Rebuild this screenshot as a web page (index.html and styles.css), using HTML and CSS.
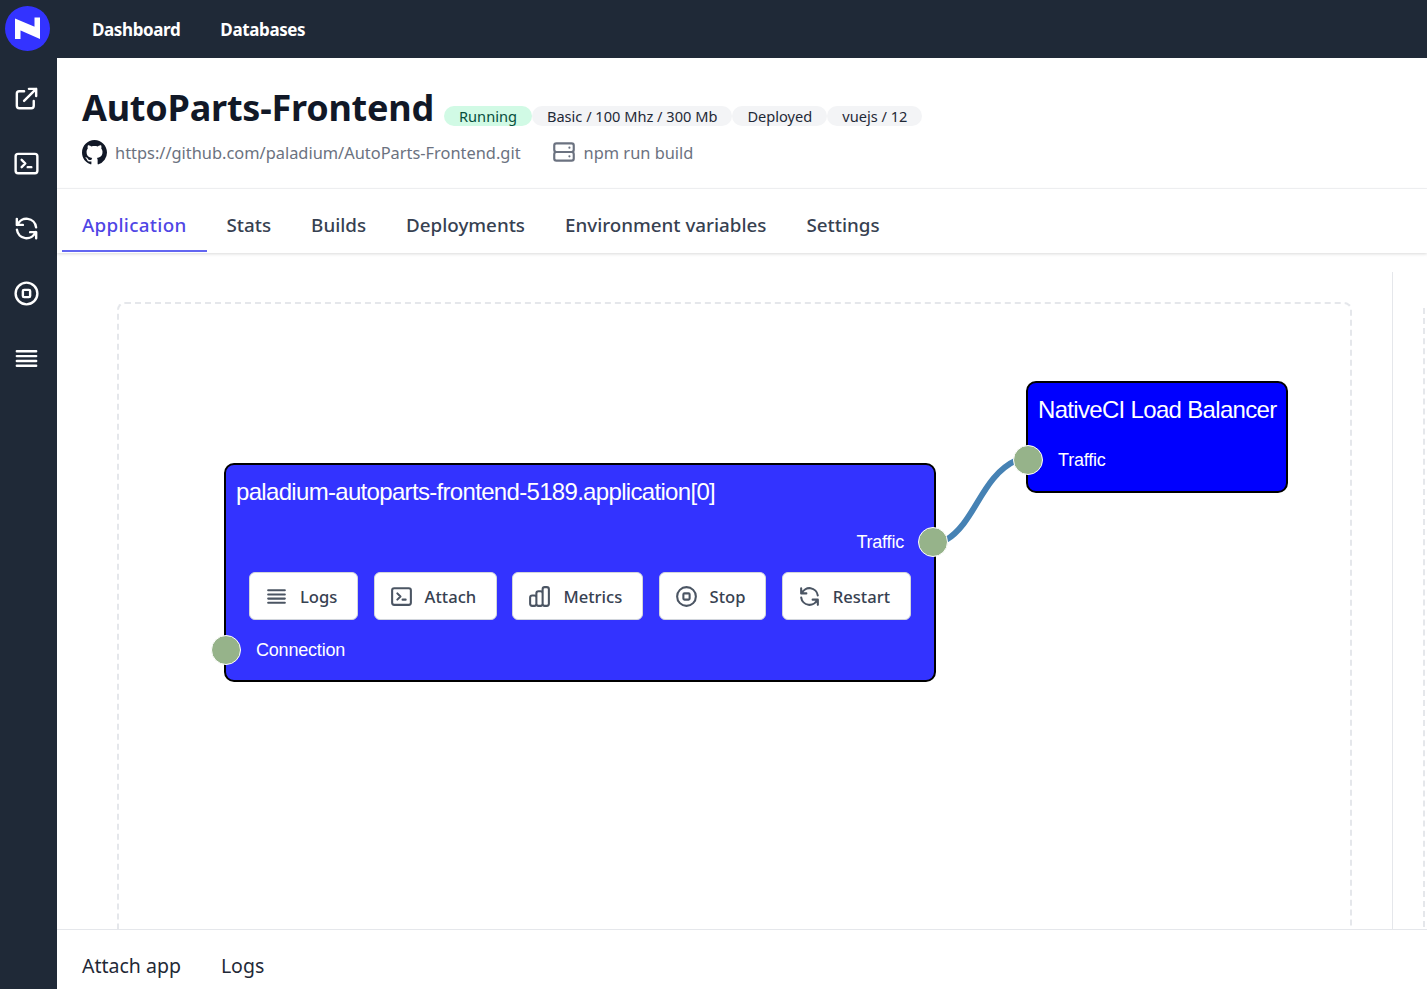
FILE: index.html

```html
<!DOCTYPE html>
<html lang="en">
<head>
  <meta charset="UTF-8">
  <title>AutoParts-Frontend</title>
  <link rel="stylesheet" href="styles.css">
</head>
<body>

<div class="app">
  <aside class="side">
    <svg class="logo" viewBox="0 0 45 45">
      <circle cx="22.5" cy="22.5" r="22.5" fill="#3333ff"/>
      <path d="M10 12.500L35 23v10L10 22zM10 22l5.500 2.300V33H10zM29.500 11.500H35V23l-5.500-2.300z" fill="#fff"/>
    </svg>
    <svg class="side-icon" viewBox="0 0 24 24"><path d="M10 6H6a2 2 0 00-2 2v10a2 2 0 002 2h10a2 2 0 002-2v-4M14 4h6m0 0v6m0-6L10 14"/></svg>
    <svg class="side-icon" viewBox="0 0 24 24"><path d="M8 9l3 3-3 3m5 0h3M5 20h14a2 2 0 002-2V6a2 2 0 00-2-2H5a2 2 0 00-2 2v12a2 2 0 002 2z"/></svg>
    <svg class="side-icon" viewBox="0 0 24 24"><path d="M4 4v5h.582m15.356 2A8.001 8.001 0 004.582 9m0 0H9m11 11v-5h-.581m0 0a8.003 8.003 0 01-15.357-2m15.357 2H15"/></svg>
    <svg class="side-icon" viewBox="0 0 24 24"><path d="M21 12a9 9 0 11-18 0 9 9 0 0118 0zM9 10a1 1 0 011-1h4a1 1 0 011 1v4a1 1 0 01-1 1h-4a1 1 0 01-1-1v-4z"/></svg>
    <svg class="side-icon" viewBox="0 0 24 24"><path d="M4 6h16M4 10h16M4 14h16M4 18h16"/></svg>
  </aside>

  <div class="content">
    <nav class="topnav">
      <a href="#">Dashboard</a>
      <a href="#">Databases</a>
    </nav>

    <header class="head">
      <div class="title-row">
        <h1>AutoParts-Frontend</h1>
        <div class="badges">
          <span class="badge badge-green">Running</span>
          <span class="badge">Basic / 100 Mhz / 300 Mb</span>
          <span class="badge">Deployed</span>
          <span class="badge">vuejs / 12</span>
        </div>
      </div>
      <div class="meta-row">
        <svg class="github" viewBox="0 0 16 16"><path d="M8 0C3.58 0 0 3.58 0 8c0 3.54 2.29 6.53 5.47 7.59.4.07.55-.17.55-.38 0-.19-.01-.82-.01-1.49-2.01.37-2.530-.49-2.69-.94-.09-.23-.48-.94-.82-1.13-.28-.15-.68-.52-.01-.53.63-.01 1.08.58 1.23.82.72 1.21 1.87.87 2.33.66.07-.52.28-.87.51-1.07-1.78-.2-3.64-.89-3.64-3.95 0-.87.31-1.59.82-2.15-.08-.2-.36-1.02.08-2.12 0 0 .67-.21 2.2.82.64-.18 1.32-.27 2-.27.68 0 1.36.09 2 .27 1.53-1.04 2.2-.82 2.2-.82.44 1.1.16 1.92.08 2.12.51.56.82 1.27.82 2.15 0 3.07-1.87 3.75-3.65 3.95.29.25.54.73.54 1.48 0 1.07-.01 1.93-.01 2.2 0 .21.15.46.55.38A8.013 8.013 0 0016 8c0-4.42-3.58-8-8-8z"/></svg>
        <span class="repo">https://github.com/paladium/AutoParts-Frontend.git</span>
        <svg class="server" viewBox="0 0 24 24"><path d="M5 12h14M5 12a2 2 0 01-2-2V6a2 2 0 012-2h14a2 2 0 012 2v4a2 2 0 01-2 2M5 12a2 2 0 00-2 2v4a2 2 0 002 2h14a2 2 0 002-2v-4a2 2 0 00-2-2m-2-4h.01M17 16h.01"/></svg>
        <span class="cmd">npm run build</span>
      </div>
    </header>

    <div class="tabs">
      <a href="#" class="tab tab-active">Application</a>
      <a href="#" class="tab">Stats</a>
      <a href="#" class="tab">Builds</a>
      <a href="#" class="tab">Deployments</a>
      <a href="#" class="tab">Environment variables</a>
      <a href="#" class="tab">Settings</a>
    </div>

    <main class="stage">
      <div class="canvas-frame"></div>
      <div class="divider"></div>
      <div class="frame-next"></div>

      <svg class="wire" viewBox="0 0 100 100" width="100" height="100">
        <path d="M15 80C45 62 50 16 86 0"/>
      </svg>

      <div class="node node-app">
        <div class="node-title">paladium-autoparts-frontend-5189.application[0]</div>
        <div class="port-out">Traffic</div>
        <div class="actions">
          <button class="action"><svg viewBox="0 0 24 24"><path d="M4 6h16M4 10h16M4 14h16M4 18h16"/></svg>Logs</button>
          <button class="action"><svg viewBox="0 0 24 24"><path d="M8 9l3 3-3 3m5 0h3M5 20h14a2 2 0 002-2V6a2 2 0 00-2-2H5a2 2 0 00-2 2v12a2 2 0 002 2z"/></svg>Attach</button>
          <button class="action"><svg viewBox="0 0 24 24"><path d="M9 19v-6a2 2 0 00-2-2H5a2 2 0 00-2 2v6a2 2 0 002 2h2a2 2 0 002-2zm0 0V9a2 2 0 012-2h2a2 2 0 012 2v10m-6 0a2 2 0 002 2h2a2 2 0 002-2m0 0V5a2 2 0 012-2h2a2 2 0 012 2v14a2 2 0 01-2 2h-2a2 2 0 01-2-2z"/></svg>Metrics</button>
          <button class="action"><svg viewBox="0 0 24 24"><path d="M21 12a9 9 0 11-18 0 9 9 0 0118 0zM9 10a1 1 0 011-1h4a1 1 0 011 1v4a1 1 0 01-1 1h-4a1 1 0 01-1-1v-4z"/></svg>Stop</button>
          <button class="action"><svg viewBox="0 0 24 24"><path d="M4 4v5h.582m15.356 2A8.001 8.001 0 004.582 9m0 0H9m11 11v-5h-.581m0 0a8.003 8.003 0 01-15.357-2m15.357 2H15"/></svg>Restart</button>
        </div>
        <div class="port-in">Connection</div>
        <span class="socket socket-out"></span>
        <span class="socket socket-in"></span>
      </div>

      <div class="node node-lb">
        <div class="node-title">NativeCI Load Balancer</div>
        <div class="port-in">Traffic</div>
        <span class="socket socket-in"></span>
      </div>
    </main>

    <footer class="bottom">
      <a href="#">Attach app</a>
      <a href="#">Logs</a>
    </footer>
  </div>
</div>

</body>
</html>
```

FILE: styles.css

```css
* {
  box-sizing: border-box;
}

html, body {
  height: 100%;
}

body {
  margin: 0;
  padding: 0;
  font-family: "Noto Sans", "Open Sans", sans-serif;
  background: #fff;
  color: #111827;
  overflow: hidden;
}

a {
  color: inherit;
  text-decoration: none;
}

.app {
  display: flex;
  height: 100vh;
}

/* left rail */
.side {
  width: 57px;
  flex: none;
  background: #1f2937;
  display: flex;
  flex-direction: column;
  align-items: center;
  padding-top: 6px;
}

.logo {
  width: 45px;
  height: 45px;
  margin-left: -2px;
  margin-bottom: 32.5px;
}

.side-icon {
  width: 29px;
  height: 29px;
  margin-left: -4px;
  margin-bottom: 36px;
  fill: none;
  stroke: #fff;
  stroke-width: 2;
  stroke-linecap: round;
  stroke-linejoin: round;
}

.content {
  flex: 1;
  min-width: 0;
  display: flex;
  flex-direction: column;
}

.topnav {
  height: 58px;
  margin-left: -1px;
  background: #1f2937;
  display: flex;
  align-items: center;
  gap: 40px;
  padding-left: 36px;
  color: #fff;
  font-size: 17px;
  font-weight: 700;
  letter-spacing: -0.38px;
}

.head {
  height: 131px;
  padding: 26px 0 0 25px;
  border-bottom: 1px solid #f3f4f6;
}

.title-row {
  display: flex;
  align-items: center;
  height: 48px;
}

.title-row h1 {
  margin: 0 10px 0 0;
  font-size: 36px;
  line-height: 48px;
  font-weight: 700;
  letter-spacing: -0.22px;
}

.badges {
  display: flex;
  margin-top: 16px;
}

.badge {
  height: 20px;
  padding: 0 15px;
  border-radius: 10px;
  background: #f3f4f6;
  color: #1f2937;
  font-size: 14.6px;
  line-height: 20px;
}

.badge-green {
  background: #d1fae5;
  color: #064e3b;
}

.meta-row {
  display: flex;
  align-items: center;
  height: 26px;
  margin-top: 7px;
  color: #6b7280;
  font-size: 16.4px;
}

.github {
  width: 25px;
  height: 25px;
  margin-right: 8px;
  fill: #111827;
}

.repo {
  margin-right: 30px;
}

.server {
  width: 26px;
  height: 26px;
  margin-right: 7px;
  fill: none;
  stroke: #6b7280;
  stroke-width: 2;
  stroke-linecap: round;
  stroke-linejoin: round;
}

.tabs {
  height: 64px;
  display: flex;
  padding-left: 5px;
  box-shadow: 0 1px 3px rgba(0,0,0,0.15);
  font-size: 18.8px;
  color: #374151;
}

.tab {
  padding: 0 20px;
  line-height: 72px;
  height: 63px;
  font-weight: 500;
}

.tab-active {
  color: #4f46e5;
  letter-spacing: 0.3px;
  border-bottom: 2px solid #6366f1;
}

/* flow canvas */
.stage {
  position: relative;
  flex: 1;
  min-height: 0;
  overflow: hidden;
}

.canvas-frame {
  position: absolute;
  left: 60px;
  top: 49px;
  width: 1235px;
  height: 800px;
  border: 2px dashed #e5e7eb;
  border-radius: 8px;
}

.divider {
  position: absolute;
  left: 1335px;
  top: 19px;
  bottom: 0;
  width: 1px;
  background: #e5e7eb;
}

.frame-next {
  position: absolute;
  left: 1366px;
  top: 55px;
  width: 200px;
  height: 800px;
  border-left: 2px dashed #e5e7eb;
}

.wire {
  position: absolute;
  left: 874px;
  top: 207px;
  fill: none;
  stroke: #4682b4;
  stroke-width: 6;
  overflow: visible;
}

.node {
  position: absolute;
  border: 2px solid #000;
  border-radius: 10px;
  color: #fff;
  font-family: "Liberation Sans", Arial, sans-serif;
}

.node-app {
  left: 167px;
  top: 210px;
  width: 712px;
  height: 219px;
  background: #3333ff;
}

.node-lb {
  left: 969px;
  top: 128px;
  width: 262px;
  height: 112px;
  background: #0000ff;
}

.node-title {
  position: absolute;
  left: 10px;
  top: 13px;
  font-size: 24px;
  line-height: 28px;
  letter-spacing: -0.68px;
  white-space: nowrap;
}

.port-out, .port-in {
  position: absolute;
  font-size: 18px;
  line-height: 22px;
  letter-spacing: -0.2px;
}

.port-out {
  right: 30px;
  top: 66px;
}

.port-in {
  left: 30px;
}

.node-app .port-in {
  top: 174px;
}

.node-lb .port-in {
  top: 66px;
}

.actions {
  position: absolute;
  left: 23px;
  top: 107px;
  display: flex;
  gap: 15.25px;
}

.action {
  height: 48px;
  padding: 0 20px 0 14px;
  display: flex;
  align-items: center;
  gap: 11px;
  background: #fff;
  border: 1px solid #d1d5db;
  border-radius: 6px;
  color: #374151;
  font-family: "Noto Sans", "Open Sans", sans-serif;
  font-size: 16.6px;
  font-weight: 500;
}

.action svg {
  width: 25px;
  height: 25px;
  fill: none;
  stroke: #4b5563;
  stroke-width: 2;
  stroke-linecap: round;
  stroke-linejoin: round;
}

.socket {
  position: absolute;
  width: 30px;
  height: 30px;
  border: 1px solid #fff;
  border-radius: 50%;
  background: #96b38a;
}

.node-app .socket-out {
  right: -14px;
  top: 62px;
}

.node-app .socket-in {
  left: -15px;
  top: 170px;
}

.node-lb .socket-in {
  left: -15px;
  top: 62px;
}

.bottom {
  position: relative;
  height: 60px;
  background: #fff;
  border-top: 1px solid #e5e7eb;
  display: flex;
  align-items: center;
  gap: 40px;
  padding: 12px 0 0 25px;
  font-size: 19.5px;
  color: #1f2937;
}
```
